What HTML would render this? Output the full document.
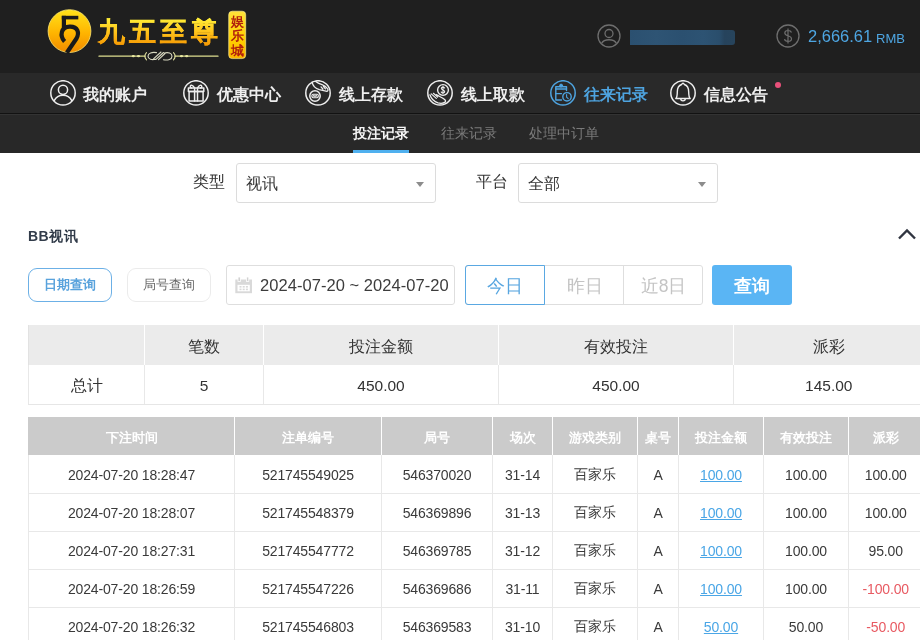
<!DOCTYPE html>
<html><head><meta charset="utf-8">
<style>
*{box-sizing:border-box;margin:0;padding:0}
html,body{width:920px;height:640px;overflow:hidden;background:#fff;font-family:"Liberation Sans",sans-serif;}
.abs{position:absolute}
#hdr{position:absolute;left:0;top:0;width:920px;height:73px;background:#1f1f1f}
#nav{position:absolute;left:0;top:73px;width:920px;height:40px;background:#292929}
#navline{position:absolute;left:0;top:113px;width:920px;height:1px;background:#121212}
#navline2{position:absolute;left:0;top:114px;width:920px;height:1px;background:#333}
#sub{position:absolute;left:0;top:115px;width:920px;height:38px;background:#282828}
.ni{position:absolute;top:0;height:40px;color:#eee;font-size:16px;line-height:40px;white-space:nowrap}
.ni svg{position:absolute;top:7px;left:0}
.ni span{position:absolute;top:2px;font-weight:500}
.st{position:absolute;top:0;font-size:14px;line-height:38px;color:#7a7a7a;white-space:nowrap}
.lbl{position:absolute;font-size:16px;color:#333;line-height:20px}
.sel{position:absolute;top:163px;width:200px;height:40px;border:1px solid #dcdcdc;border-radius:3px;background:#fff}
.sel span{position:absolute;left:9px;top:1px;line-height:38px;font-size:16px;color:#333}
.sel i{position:absolute;right:11px;top:18px;width:0;height:0;border-left:4.5px solid transparent;border-right:4.5px solid transparent;border-top:5px solid #8c8c8c}
table{border-collapse:collapse;table-layout:fixed;position:absolute}
td,th{text-align:center;white-space:nowrap;overflow:hidden}
#sum{left:28px;top:325px}
#sum th{height:40px;padding-top:5px;background:#ebebeb;font-weight:normal;font-size:15.5px;color:#333;border-left:1px solid #fff}
#sum td{height:39px;padding-top:4px;font-size:15.5px;color:#333;border-left:1px solid #e8e8e8;border-bottom:1px solid #e6e6e6}
#det{left:28px;top:417px}
#det th{height:38px;padding-top:3px;background:#cbcbcb;font-size:13.4px;color:#fff;font-weight:bold;border-left:1px solid #fff}
#det td{height:38px;padding-top:2px;font-size:14px;letter-spacing:-0.15px;color:#333;border-left:1px solid #e8e8e8;border-bottom:1px solid #e8e8e8}
#det a{color:#4aa6e6;text-decoration:underline}
.neg{color:#e85a62 !important}
#sum th:first-child{border-left-color:#e2e2e2}
#det th:first-child{border-left-color:#cbcbcb}
#det td{color:#3a3a3a}
</style></head><body><div id="wrap" style="position:absolute;left:0;top:0;width:920px;height:640px;will-change:transform">
<div id="hdr"></div>
<div id="nav"></div>
<div id="navline"></div>
<div id="navline2"></div>
<div id="sub"></div>

<svg class="abs" style="left:0;top:0" width="260" height="73" viewBox="0 0 260 73">
<defs>
<linearGradient id="gc" x1="0" y1="0" x2="0" y2="1"><stop offset="0" stop-color="#ffe21a"/><stop offset="0.55" stop-color="#ffb400"/><stop offset="1" stop-color="#f08a00"/></linearGradient>
<linearGradient id="gt" x1="0" y1="0" x2="0" y2="1"><stop offset="0" stop-color="#fff23a"/><stop offset="0.5" stop-color="#ffc21a"/><stop offset="1" stop-color="#f39200"/></linearGradient>
<linearGradient id="gb" x1="0" y1="0" x2="0" y2="1"><stop offset="0" stop-color="#ffe23a"/><stop offset="0.6" stop-color="#ffd000"/><stop offset="1" stop-color="#fbb400"/></linearGradient>
</defs>
<circle cx="69.5" cy="31.1" r="21.4" fill="url(#gc)" stroke="#ffe870" stroke-width="0.8"/>
<g fill="none" stroke="#1a1a1a" stroke-width="4.2" stroke-linejoin="miter">
<path d="M61.8 17.6 H78.3" stroke-width="3.6"/><path d="M63.9 15.8 V28"/>
<path d="M64.6 41.5 C59.5 36 60.8 26.8 69.8 26.6 C77.8 26.4 79.8 33 76.3 38.8 L66.8 52.8"/>
</g>
<text x="97.5" y="41.3" style="font-family:'Liberation Serif',serif;font-weight:900;font-size:27px" fill="url(#gt)" stroke="url(#gt)" stroke-width="0.3" letter-spacing="4.3">九五至尊</text>
<rect x="228.7" y="11.2" width="17" height="47.4" rx="3.5" fill="url(#gb)" stroke="#fff3a0" stroke-width="0.6"/>
<text style="font-family:'Liberation Serif',serif;font-weight:900;font-size:13px" fill="#b01e0c" text-anchor="middle"><tspan x="237.3" y="25.5">娱</tspan><tspan x="237.3" y="40">乐</tspan><tspan x="237.3" y="54.8">城</tspan></text>
<g fill="none" stroke-linecap="round">
<path d="M99 56.2 H145 M175 56.2 H218" stroke="#dede90" stroke-width="1.3"/>
<g fill="#e8e8a0"><ellipse cx="133.3" cy="56.2" rx="1.6" ry="1.1"/><ellipse cx="138.5" cy="56.2" rx="1.6" ry="1.1"/><ellipse cx="181.5" cy="56.2" rx="1.6" ry="1.1"/><ellipse cx="186.7" cy="56.2" rx="1.6" ry="1.1"/></g>
<path d="M146.5 52.6 Q143.2 56.2 146.5 59.8 M173.5 52.6 Q176.8 56.2 173.5 59.8" stroke="#e0e0a0" stroke-width="1.1"/>
<path d="M156.5 52.6 C152 51.8 148 53 148 56.2 C148 59.4 152 60.2 155.5 59.2 M163.5 59.8 C168 60.6 172 59.4 172 56.2 C172 53 168 52 164.5 53 M153.5 58.8 L161 52 M156 59.3 L163.5 52.5 M158.5 59.6 L165.5 53" stroke="#d8d8c0" stroke-width="1.1"/>
</g>
</svg>
<svg class="abs" style="left:596px;top:24px" width="26" height="24" viewBox="0 0 26 24"><circle cx="13" cy="12" r="11" fill="none" stroke="#6e6e6e" stroke-width="1.3"/><circle cx="13" cy="9.5" r="4" fill="none" stroke="#6e6e6e" stroke-width="1.3"/><path d="M5.5 19.5 C8 14.5 18 14.5 20.5 19.5" fill="none" stroke="#6e6e6e" stroke-width="1.3"/></svg>
<div class="abs" style="left:630px;top:30px;width:105px;height:15px;background:linear-gradient(90deg,#2b5070 0%,#2e5474 25%,#2b5070 50%,#2d5373 70%,#2a4e6c 85%,#26435c 90%,#27445c 100%);border-radius:0 3px 3px 0"></div>
<svg class="abs" style="left:776px;top:24px" width="26" height="24" viewBox="0 0 26 24"><circle cx="12" cy="12" r="11" fill="none" stroke="#6e6e6e" stroke-width="1.3"/><path d="M15.5 8.5 C15 7 13.5 6.5 12 6.5 C10 6.5 8.8 7.6 8.8 9 C8.8 12.5 15.5 11 15.5 14.8 C15.5 16.3 14 17.4 12 17.4 C10.2 17.4 8.8 16.6 8.5 15.2 M12 4.5 V19.5" fill="none" stroke="#6e6e6e" stroke-width="1.2"/></svg>
<div class="abs" style="left:808px;top:25px;font-size:16.5px;color:#4ea6e2;line-height:22px;white-space:nowrap">2,666.61</div><div class="abs" style="left:876px;top:30.5px;font-size:13px;color:#4ea6e2;line-height:16px;white-space:nowrap">RMB</div>


<!-- nav items -->
<svg class="abs" style="left:50px;top:80px" width="27" height="27" viewBox="0 0 27 27"><g fill="none" stroke="#eeeeee" stroke-width="1.5" stroke-linecap="round" stroke-linejoin="round"><circle cx="13" cy="12.9" r="12.2"/><circle cx="13" cy="9.8" r="4.6"/><path d="M4.2 20.6 A9.9 9.9 0 0 1 21.8 20.6"/></g></svg>
<svg class="abs" style="left:183px;top:80px" width="27" height="27" viewBox="0 0 27 27"><g fill="none" stroke="#eeeeee" stroke-width="1.5" stroke-linecap="round" stroke-linejoin="round"><circle cx="13" cy="12.9" r="12.2"/><rect x="5.4" y="8.1" width="15.4" height="3.4"/><rect x="6.1" y="11.5" width="14" height="9.4"/><path d="M11.6 8.1V20.9M14.5 8.1V20.9M11.6 8.1C10 5 7.5 4.5 7.3 6.5 7.2 7.5 8 8 8.5 8.1M14.5 8.1C16 5 18.5 4.5 18.8 6.5 18.9 7.5 18 8 17.5 8.1"/></g></svg>
<svg class="abs" style="left:305px;top:80px" width="27" height="27" viewBox="0 0 27 27"><g fill="none" stroke="#eeeeee" stroke-width="1.5" stroke-linecap="round" stroke-linejoin="round"><circle cx="13" cy="12.9" r="12.2"/><circle cx="10" cy="16" r="5.2"/><rect x="6.9" y="14.3" width="6.4" height="3.5" rx="1.2" stroke-width="1.1"/><path d="M7.8 17.2l1.1-2.4 1.1 2.4 1.1-2.4 1.1 2.4" stroke-width="0.9"/><path d="M7.1 2.2C7.8 6 10.5 8.6 14.4 9.7L22 11.4C23.2 11 23.2 9.5 22.5 8.6C21 6.5 19.5 5.5 17 4.6C14.5 3.8 12.5 3 10.7 1.5M16 6.9L17.9 9M18.4 6.4L20.4 8.9" stroke-width="1.3"/></g></svg>
<svg class="abs" style="left:427px;top:80px" width="27" height="27" viewBox="0 0 27 27"><g fill="none" stroke="#eeeeee" stroke-width="1.5" stroke-linecap="round" stroke-linejoin="round"><circle cx="13" cy="12.9" r="12.2"/><circle cx="16" cy="10" r="5.4" stroke-width="1.4"/><path d="M17.6 8C17.2 7.4 16.6 7.1 15.9 7.1 15 7.1 14.3 7.7 14.3 8.5 14.3 10.2 17.7 9.7 17.7 11.5 17.7 12.4 16.9 12.9 16 12.9 15.2 12.9 14.5 12.5 14.2 11.9M16 6.2V13.8" stroke-width="1.1"/><path d="M2.9 14.8C4.2 18.6 7 21.7 11 22.9 14 23.7 16.6 23.2 18.2 22.1 18.9 21.3 18.5 20.1 17.3 19.2 15.5 17.8 12.3 16.6 9.2 14.6" stroke-width="1.3"/><path d="M4.2 13.9L9.3 18.4M6.4 13.3L10.6 17" stroke-width="1.2"/></g></svg>
<svg class="abs" style="left:550px;top:80px" width="27" height="27" viewBox="0 0 27 27"><g fill="none" stroke="#4ea4e0" stroke-width="1.5" stroke-linecap="round" stroke-linejoin="round"><circle cx="13" cy="12.9" r="12.2"/><path d="M16.5 10.5V6.8H5.8V20H11.5" stroke-width="1.4"/><circle cx="11.1" cy="5.6" r="1.5" fill="#4ea4e0" stroke-width="1"/><path d="M5.8 9H16.5M5.8 13.6H11.5" stroke-width="1.3"/><circle cx="17" cy="16.8" r="4.2" stroke-width="1.4"/><path d="M16.6 14.6V17.2l1.6 1.4" stroke-width="1.1"/></g></svg>
<svg class="abs" style="left:670px;top:80px" width="27" height="27" viewBox="0 0 27 27"><g fill="none" stroke="#eeeeee" stroke-width="1.5" stroke-linecap="round" stroke-linejoin="round"><circle cx="13" cy="12.9" r="12.2"/><path d="M5.8 18.5C6.8 17.5 7.3 15.5 7.3 12C7.3 7.5 9.5 5.2 11.6 4.5C12 3.7 12.5 3.3 13 3.3S14 3.7 14.4 4.5C16.5 5.2 18.7 7.5 18.7 12C18.7 15.5 19.2 17.5 20.2 18.5Z" stroke-width="1.4"/><path d="M10.7 18.6A2.3 2.3 0 0 0 15.3 18.6" stroke-width="1.4"/></g></svg>
<div class="abs" style="left:83px;top:75px;font-size:16px;line-height:40px;font-weight:600;color:#eeeeee;white-space:nowrap">我的账户</div>
<div class="abs" style="left:217px;top:75px;font-size:16px;line-height:40px;font-weight:600;color:#eeeeee;white-space:nowrap">优惠中心</div>
<div class="abs" style="left:339px;top:75px;font-size:16px;line-height:40px;font-weight:600;color:#eeeeee;white-space:nowrap">线上存款</div>
<div class="abs" style="left:461px;top:75px;font-size:16px;line-height:40px;font-weight:600;color:#eeeeee;white-space:nowrap">线上取款</div>
<div class="abs" style="left:584px;top:75px;font-size:16px;line-height:40px;font-weight:600;color:#4ea4e0;white-space:nowrap">往来记录</div>
<div class="abs" style="left:704px;top:75px;font-size:16px;line-height:40px;font-weight:600;color:#eeeeee;white-space:nowrap">信息公告</div>
<div class="abs" style="left:775px;top:82px;width:6px;height:6px;border-radius:50%;background:#e8507a"></div>

<!-- sub nav -->
<div class="st" style="left:353px;top:114px;color:#f4f4f4;font-weight:600">投注记录</div>
<div class="abs" style="left:353px;top:150px;width:56px;height:3px;background:#4fb0ef"></div>
<div class="st" style="left:441px;top:114px">往来记录</div>
<div class="st" style="left:529px;top:114px">处理中订单</div>

<!-- form -->
<div class="lbl" style="left:193px;top:172px">类型</div>
<div class="sel" style="left:236px"><span>视讯</span><i></i></div>
<div class="lbl" style="left:476px;top:172px">平台</div>
<div class="sel" style="left:518px"><span>全部</span><i></i></div>

<div class="abs" style="left:28px;top:226px;font-size:14px;line-height:20px;font-weight:bold;color:#323c4a;letter-spacing:0.5px">BB视讯</div>
<svg class="abs" style="left:897px;top:228px" width="20" height="12" viewBox="0 0 20 12"><path d="M2 10.5 L10 2.5 L18 10.5" fill="none" stroke="#303540" stroke-width="2.4"/></svg>

<div class="abs" style="left:28px;top:268px;width:84px;height:34px;border:1px solid #6cb0e6;border-radius:9px;color:#58a2dc;font-size:13px;font-weight:bold;text-align:center;line-height:32px">日期查询</div>
<div class="abs" style="left:127px;top:268px;width:84px;height:34px;border:1px solid #ebebeb;border-radius:9px;color:#6a6a6a;font-size:13px;text-align:center;line-height:32px">局号查询</div>

<div class="abs" style="left:226px;top:265px;width:229px;height:40px;border:1px solid #dedede;border-radius:3px"></div>
<svg class="abs" style="left:235px;top:276px" width="18" height="18" viewBox="0 0 18 18"><rect x="0.3" y="3.5" width="16.7" height="13.7" fill="#d9d9d9"/><rect x="2.5" y="8.8" width="12.3" height="6.5" fill="#fff"/><g fill="#d9d9d9"><rect x="4.5" y="10" width="2" height="1.6"/><rect x="7.7" y="10" width="2" height="1.6"/><rect x="10.9" y="10" width="2" height="1.6"/><rect x="4.5" y="12.6" width="2" height="1.6"/><rect x="7.7" y="12.6" width="2" height="1.6"/><rect x="10.9" y="12.6" width="2" height="1.6"/></g><rect x="3" y="1" width="2.4" height="4.5" fill="#d2d2d2" stroke="#fff" stroke-width="0.8"/><rect x="11.4" y="1" width="2.4" height="4.5" fill="#d2d2d2" stroke="#fff" stroke-width="0.8"/></svg>
<div class="abs" style="left:260px;top:275px;font-size:16.5px;letter-spacing:0.05px;color:#3c3c3c;line-height:20px;white-space:nowrap">2024-07-20 ~ 2024-07-20</div>

<div class="abs" style="left:465px;top:265px;width:238px;height:40px;border:1px solid #dedede;border-radius:3px"></div>
<div class="abs" style="left:465px;top:265px;width:80px;height:40px;border:1px solid #5aa8e2;border-radius:3px 0 0 3px;color:#58a6e0;font-size:17.5px;text-align:center;line-height:40px">今日</div>
<div class="abs" style="left:545px;top:265px;width:79px;height:40px;color:#c4c4c4;font-size:17.5px;text-align:center;line-height:42px">昨日</div>
<div class="abs" style="left:623px;top:266px;width:1px;height:38px;background:#dedede"></div>
<div class="abs" style="left:624px;top:265px;width:79px;height:40px;color:#c4c4c4;font-size:17.5px;text-align:center;line-height:42px">近8日</div>
<div class="abs" style="left:712px;top:265px;width:80px;height:40px;background:#5ab5f4;border-radius:3px;color:#fff;font-size:17.5px;font-weight:bold;text-align:center;line-height:42px">查询</div>

<table id="sum" style="width:895px"><colgroup><col style="width:116px"><col style="width:119px"><col style="width:235px"><col style="width:235px"><col style="width:190px"></colgroup>
<tr><th></th><th>笔数</th><th>投注金额</th><th>有效投注</th><th>派彩</th></tr>
<tr><td>总计</td><td>5</td><td>450.00</td><td>450.00</td><td>145.00</td></tr>
</table>
<table id="det" style="width:894px"><colgroup><col style="width:206px"><col style="width:147px"><col style="width:111px"><col style="width:60px"><col style="width:85px"><col style="width:41px"><col style="width:85px"><col style="width:85px"><col style="width:74px"></colgroup>
<tr><th>下注时间</th><th>注单编号</th><th>局号</th><th>场次</th><th>游戏类别</th><th>桌号</th><th>投注金额</th><th>有效投注</th><th>派彩</th></tr>
<tr><td>2024-07-20 18:28:47</td><td>521745549025</td><td>546370020</td><td>31-14</td><td>百家乐</td><td>A</td><td><a>100.00</a></td><td>100.00</td><td>100.00</td></tr>
<tr><td>2024-07-20 18:28:07</td><td>521745548379</td><td>546369896</td><td>31-13</td><td>百家乐</td><td>A</td><td><a>100.00</a></td><td>100.00</td><td>100.00</td></tr>
<tr><td>2024-07-20 18:27:31</td><td>521745547772</td><td>546369785</td><td>31-12</td><td>百家乐</td><td>A</td><td><a>100.00</a></td><td>100.00</td><td>95.00</td></tr>
<tr><td>2024-07-20 18:26:59</td><td>521745547226</td><td>546369686</td><td>31-11</td><td>百家乐</td><td>A</td><td><a>100.00</a></td><td>100.00</td><td class="neg">-100.00</td></tr>
<tr><td>2024-07-20 18:26:32</td><td>521745546803</td><td>546369583</td><td>31-10</td><td>百家乐</td><td>A</td><td><a>50.00</a></td><td>50.00</td><td class="neg">-50.00</td></tr>
</table>
</div></body></html>
